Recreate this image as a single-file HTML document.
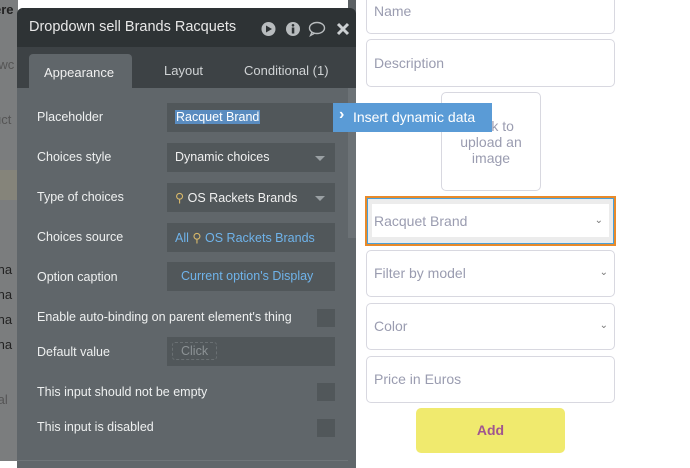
<!DOCTYPE html>
<html><head><style>
*{box-sizing:border-box;margin:0;padding:0}
body{width:690px;height:461px;overflow:hidden;background:#fff;font-family:"Liberation Sans","DejaVu Sans",sans-serif;position:relative}
.abs{position:absolute}
.strip{left:0;top:0;width:18px;height:461px;background:#7b7d7e;overflow:hidden;color:#222;font-size:13px}
.strip div{position:absolute;left:-6px;white-space:nowrap}
.panel{left:17px;top:8px;width:339px;height:460px;background:#60666a;border-radius:6px 6px 0 0;overflow:hidden}
.hdr{left:0;top:0;width:339px;height:39px;background:#2e3335;color:#e8e8e8;font-size:14.5px;padding:11px 0 0 12px}
.tabs{left:0;top:39px;width:339px;height:41px;background:#3d4245}
.tab{position:absolute;top:16px;color:#d0d3d5;font-size:13px}
.active{left:12px;top:7px;width:103px;height:34px;background:#60666a;border-radius:4px 4px 0 0;color:#f0f0f0;padding:11px 0 0 15px}
.lbl{left:20px;color:#eef0f0;font-size:12.5px}
.fld{left:150px;width:168px;height:29px;background:#51575a;color:#f0f0f0;font-size:12.5px;padding:7px 8px}
.arr{position:absolute;right:10px;top:13px;border:5px solid transparent;border-top:5px solid #9aa0a3;border-bottom:0}
.cb{left:300px;width:18px;height:18px;background:#51575a}
.blue{color:#6fb3ea}
.inp{border:1px solid #d8d8e0;border-radius:5px;background:#fff;color:#9a9cb0;font-size:14px;padding-left:7px}
.chev{position:absolute;right:6px;font-size:10px;color:#777}
</style></head><body>
<div class="abs strip">
<div style="top:2px;font-weight:bold">ere</div>
<div style="top:57px;color:#555">rwc</div>
<div style="top:112px;color:#555">uct</div>
<div style="top:170px;left:0;width:18px;height:30px;background:#85847a"></div>
<div style="top:205px">t</div>
<div style="top:262px">/na</div><div style="top:287px">/na</div><div style="top:312px">/na</div><div style="top:337px">/na</div>
<div style="top:392px;color:#555">tal</div>
<div style="top:437px">t</div>
</div>
<div class="abs" style="left:348px;top:0;width:8px;height:461px;background:#5b6063"></div>
<div class="abs panel">
<div class="abs hdr">Dropdown sell Brands Racquets</div>
<svg class="abs" style="left:244px;top:13px" width="100" height="16">
<circle cx="7.5" cy="8" r="7" fill="#b8bcbe"/><path d="M5 4.5 L11 8 L5 11.5Z" fill="#2e3335"/>
<circle cx="32" cy="8" r="7" fill="#b8bcbe"/><rect x="30.8" y="6.5" width="2.5" height="6" fill="#2e3335"/><circle cx="32" cy="4.3" r="1.3" fill="#2e3335"/>
<ellipse cx="56" cy="7" rx="7.5" ry="5.5" fill="none" stroke="#b8bcbe" stroke-width="1.4"/><path d="M51 11 L49.5 14.5 L54 12" fill="none" stroke="#b8bcbe" stroke-width="1.3"/>
<path d="M77 3 L87 13 M87 3 L77 13" stroke="#ccd0d2" stroke-width="3"/>
</svg>
<div class="abs tabs">
<div class="tab active">Appearance</div>
<div class="tab" style="left:147px">Layout</div>
<div class="tab" style="left:227px">Conditional (1)</div>
</div>
<div class="abs" style="left:331px;top:80px;width:8px;height:150px;background:#6c7276"></div>
<div class="abs lbl" style="top:102px">Placeholder</div>
<div class="abs fld" style="top:95px;width:170px"><span style="background:#5a8cc0;color:#fff;padding:0 1px">Racquet Brand</span></div>
<div class="abs lbl" style="top:142px">Choices style</div>
<div class="abs fld" style="top:135px">Dynamic choices<span class="arr"></span></div>
<div class="abs lbl" style="top:182px">Type of choices</div>
<div class="abs fld" style="top:175px"><span style="color:#d8b86a">⚲</span> OS Rackets Brands<span class="arr"></span></div>
<div class="abs lbl" style="top:222px">Choices source</div>
<div class="abs fld blue" style="top:215px">All <span style="color:#d8b86a">⚲</span> OS Rackets Brands</div>
<div class="abs lbl" style="top:262px">Option caption</div>
<div class="abs fld blue" style="top:254px;padding-left:14px">Current option's Display</div>
<div class="abs lbl" style="top:302px">Enable auto-binding on parent element's thing</div>
<div class="abs cb" style="top:301px"></div>
<div class="abs lbl" style="top:337px">Default value</div>
<div class="abs fld" style="top:329px"><span style="border:1px dashed #6a7073;border-radius:3px;color:#8c9295;padding:1px 8px;margin-left:-3px">Click</span></div>
<div class="abs lbl" style="top:377px">This input should not be empty</div>
<div class="abs cb" style="top:375px"></div>
<div class="abs lbl" style="top:412px">This input is disabled</div>
<div class="abs cb" style="top:411px"></div>
<div class="abs" style="left:0;top:452px;width:331px;height:1px;background:#6e7478"></div>
</div>
<div class="abs inp" style="left:366px;top:-6px;width:249px;height:40px;padding-top:8px">Name</div>
<div class="abs inp" style="left:366px;top:39px;width:249px;height:48px;padding-top:15px">Description</div>
<div class="abs" style="left:441px;top:92px;width:100px;height:99px;border:1px solid #d8d8e0;border-radius:5px;color:#9a9cb0;font-size:14px;text-align:center;padding-top:25px;line-height:16px">Click to<br>upload an<br>image</div>
<div class="abs" style="left:333px;top:103px;width:159px;height:29px;background:#5a9bd6;color:#fff;font-size:14px;padding:6px 0 0 20px">Insert dynamic data<span style="position:absolute;left:6px;top:3px;font-weight:bold;font-size:16px">›</span></div>
<div class="abs" style="left:365px;top:196px;width:251px;height:50px;border:2px solid #e88a2a;box-shadow:inset 0 0 0 1px #4aa0d8;background:#ececec">
<div class="abs inp" style="left:5px;top:6px;width:237px;height:33px;border:none;border-radius:0;padding:9px 0 0 2px">Racquet Brand<span class="chev" style="top:11px">⌄</span></div></div>
<div class="abs inp" style="left:366px;top:250px;width:249px;height:47px;padding-top:14px">Filter by model<span class="chev" style="top:16px">⌄</span></div>
<div class="abs inp" style="left:366px;top:303px;width:249px;height:47px;padding-top:14px">Color<span class="chev" style="top:16px">⌄</span></div>
<div class="abs inp" style="left:366px;top:356px;width:249px;height:47px;padding-top:14px">Price in Euros</div>
<div class="abs" style="left:416px;top:408px;width:149px;height:45px;background:#f0ea6e;border-radius:5px;color:#a0558f;font-weight:bold;font-size:14px;text-align:center;padding-top:14px">Add</div>
</body></html>
